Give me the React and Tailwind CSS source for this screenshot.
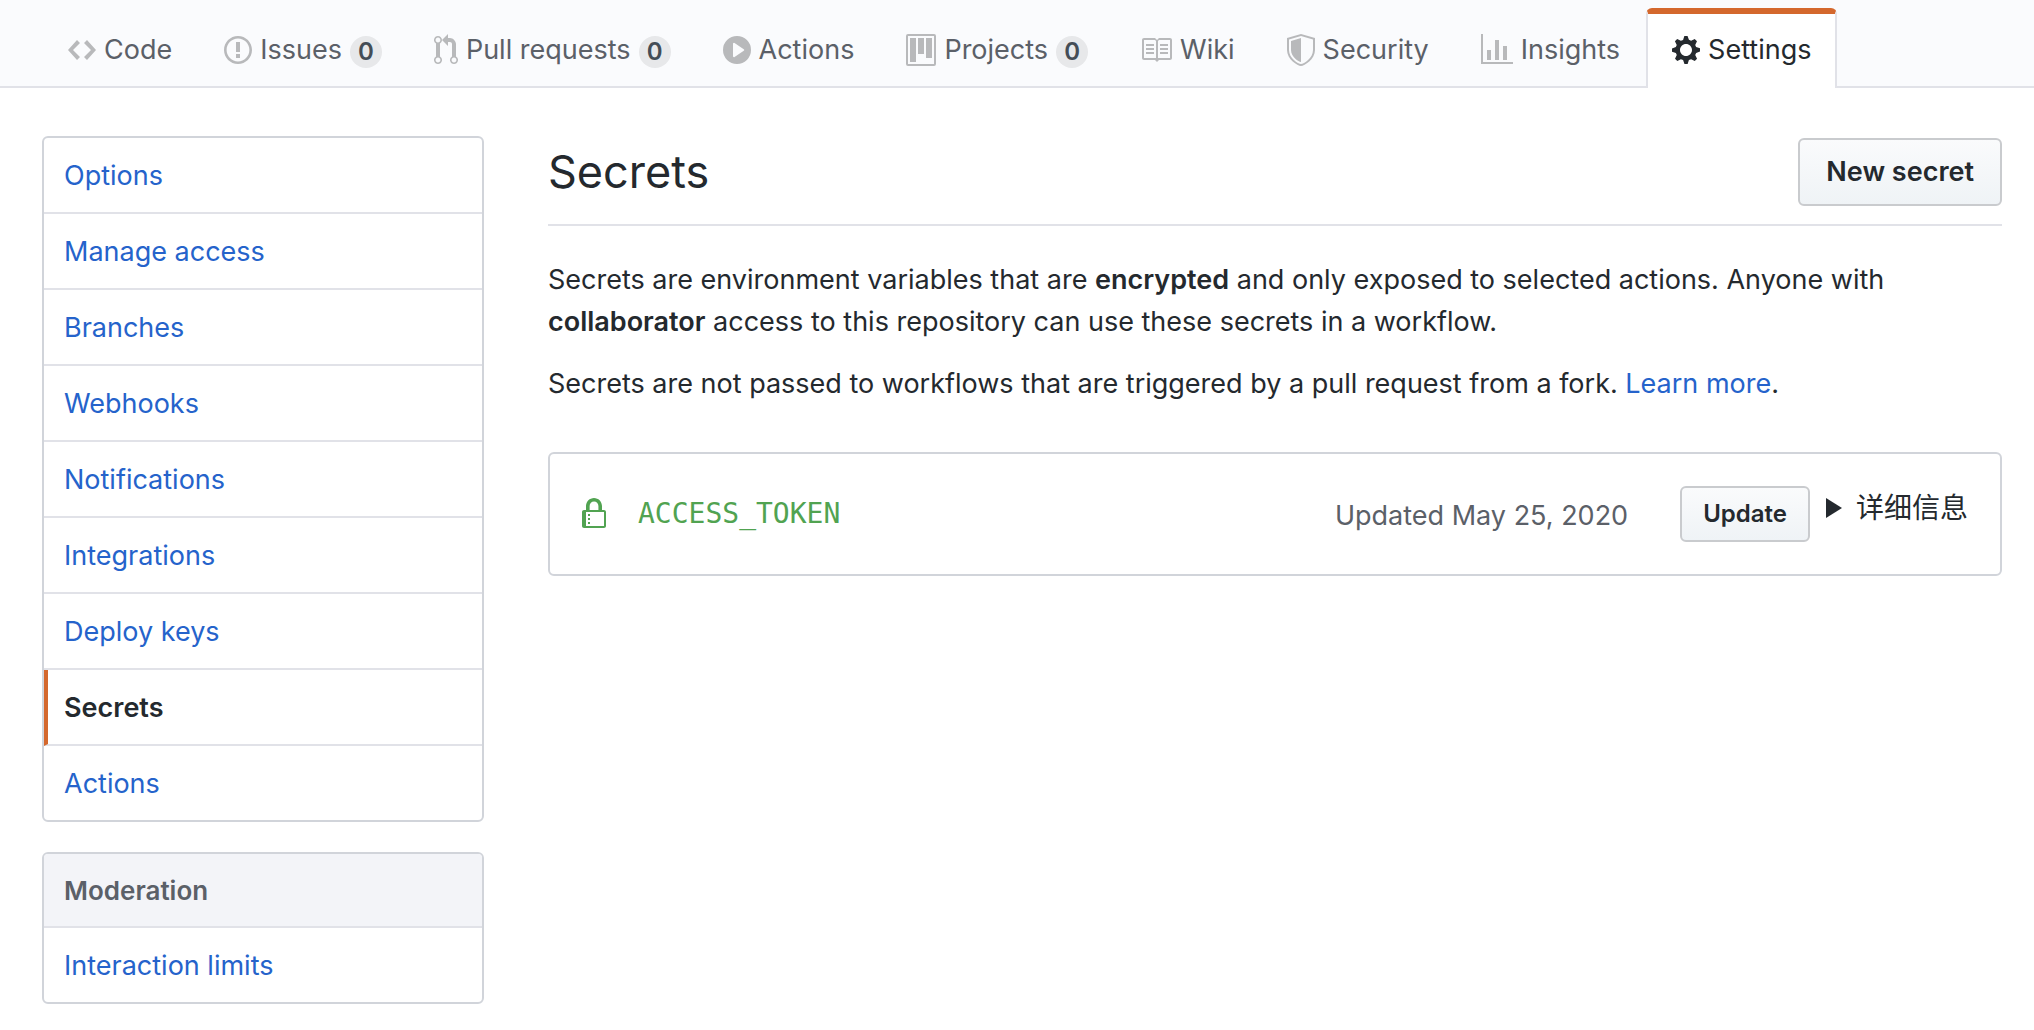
const ICONS = {
  code: {
    w: 14,
    d: "M9.5 3L8 4.5 11.5 8 8 11.5 9.5 13 14 8 9.5 3zm-5 0L0 8l4.5 5L6 11.5 2.5 8 6 4.5 4.5 3z",
  },
  issue: {
    w: 14,
    d: "M7 2.3c3.14 0 5.7 2.56 5.7 5.7s-2.56 5.7-5.7 5.7A5.71 5.71 0 0 1 1.3 8c0-3.14 2.56-5.7 5.7-5.7zM7 1C3.14 1 0 4.14 0 8s3.14 7 7 7 7-3.14 7-7-3.14-7-7-7zm1 3H6v5h2V4zm0 6H6v2h2v-2z",
  },
  pull: {
    w: 12,
    d: "M11 11.28V5c-.03-.78-.34-1.47-.94-2.06C9.46 2.35 8.78 2.03 8 2H7V0L4 3l3 3V4h1c.27.02.48.11.69.31.21.2.3.42.31.69v6.28A1.993 1.993 0 0 0 10 15a1.993 1.993 0 0 0 1-3.72zm-1 2.92c-.66 0-1.2-.55-1.2-1.2 0-.65.55-1.2 1.2-1.2.65 0 1.2.55 1.2 1.2 0 .65-.55 1.2-1.2 1.2zM4 3c0-1.11-.89-2-2-2a1.993 1.993 0 0 0-1 3.72v6.56A1.993 1.993 0 0 0 2 15a1.993 1.993 0 0 0 1-3.72V4.72c.59-.34 1-.98 1-1.72zm-.8 10c0 .66-.55 1.2-1.2 1.2-.65 0-1.2-.55-1.2-1.2 0-.65.55-1.2 1.2-1.2.65 0 1.2.55 1.2 1.2zM2 4.2C1.34 4.2.8 3.65.8 3c0-.65.55-1.2 1.2-1.2.65 0 1.2.55 1.2 1.2 0 .65-.55 1.2-1.2 1.2z",
  },
  play: {
    w: 14,
    d: "M14 8A7 7 0 1 1 0 8a7 7 0 0 1 14 0zm-8.223 3.482l4.599-3.066a.5.5 0 0 0 0-.832L5.777 4.518A.5.5 0 0 0 5 4.934v6.132a.5.5 0 0 0 .777.416z",
  },
  project: {
    w: 15,
    d: "M10 12h3V2h-3v10zm-4-2h3V2H6v8zm-4 4h3V2H2v12zm-1 1h13V1H1v14zM14 0H1a1 1 0 0 0-1 1v14a1 1 0 0 0 1 1h13a1 1 0 0 0 1-1V1a1 1 0 0 0-1-1z",
  },
  book: {
    w: 16,
    d: "M3 5h4v1H3V5zm0 3h4V7H3v1zm0 2h4V9H3v1zm11-5h-4v1h4V5zm0 2h-4v1h4V7zm0 2h-4v1h4V9zm2-6v9c0 .55-.45 1-1 1H9.5l-1 1-1-1H2c-.55 0-1-.45-1-1V3c0-.55.45-1 1-1h5.5l1 1 1-1H15c.55 0 1 .45 1 1zm-8 .5L7.5 3H2v9h6V3.5zm7-.5H9.5l-.5.5V12h6V3z",
  },
  shield: {
    w: 14,
    d: "M0 2l7-2 7 2v6.02C14 12.69 8.69 16 7 16c-1.69 0-7-3.31-7-7.98V2zm1 .75L7 1l6 1.75v5.268C13 12.104 8.449 15 7 15c-1.449 0-6-2.896-6-6.982V2.75zm1 .75L7 2v12c-1.207 0-5-2.482-5-5.985V3.5z",
  },
  graph: {
    w: 16,
    d: "M16 14v1H0V0h1v14h15zM5 13H3V8h2v5zm4 0H7V3h2v10zm4 0h-2V6h2v7z",
  },
  gear: {
    w: 14,
    d: "M14 8.77v-1.6l-1.94-.64-.45-1.09.88-1.84-1.13-1.13-1.81.91-1.09-.45-.69-1.92h-1.6l-.63 1.94-1.11.45-1.84-.88-1.13 1.13.91 1.81-.45 1.09L0 7.23v1.59l1.94.64.45 1.09-.88 1.84 1.13 1.13 1.81-.91 1.09.45.69 1.92h1.59l.63-1.94 1.11-.45 1.84.88 1.13-1.13-.92-1.81.47-1.09L14 8.75v.02zM7 11c-1.66 0-3-1.34-3-3s1.34-3 3-3 3 1.34 3 3-1.34 3-3 3z",
  },
  lock: {
    w: 12,
    d: "M4 13H3v-1h1v1zm8-6v7c0 .55-.45 1-1 1H1c-.55 0-1-.45-1-1V7c0-.55.45-1 1-1h1V4c0-2.2 1.8-4 4-4s4 1.8 4 4v2h1c.55 0 1 .45 1 1zM3.8 6h4.41V4c0-1.22-.98-2.2-2.2-2.2-1.22 0-2.2.98-2.2 2.2v2H3.8zM11 7H2v7h9V7zM4 8H3v1h1V8zm0 2H3v1h1v-1z",
  },
};

function Icon({ name, className }) {
  const { w, d } = ICONS[name];
  return (
    <svg
      width={w * 2}
      height={32}
      viewBox={`0 0 ${w} 16`}
      fill="currentColor"
      aria-hidden="true"
      className={className}
    >
      <path fillRule="evenodd" d={d} />
    </svg>
  );
}

const TABS = [
  { icon: "code", label: "Code" },
  { icon: "issue", label: "Issues", count: 0 },
  { icon: "pull", label: "Pull requests", count: 0 },
  { icon: "play", label: "Actions" },
  { icon: "project", label: "Projects", count: 0 },
  { icon: "book", label: "Wiki" },
  { icon: "shield", label: "Security" },
  { icon: "graph", label: "Insights" },
  { icon: "gear", label: "Settings", selected: true },
];

function Tab({ icon, label, count, selected }) {
  return (
    <a
      href="#"
      aria-current={selected ? "page" : undefined}
      className={
        selected
          ? "-mb-0.5 flex items-center gap-2 rounded-t-md border-x-2 border-t-6 border-x-[#e1e2e8] border-t-[#d4682d] bg-white px-6 pb-0.5 text-[#24292e]"
          : "flex items-center gap-2 border-x-2 border-t-6 border-transparent px-6 text-[#5b6068]"
      }
    >
      <Icon name={icon} className={selected ? "shrink-0" : "shrink-0 text-[#b8b9bb]"} />
      {label}
      {count !== undefined && (
        <span className="mt-1 flex size-8 items-center justify-center rounded-full bg-[#e7e8ea] text-2xl font-semibold text-[#444d56]">
          {count}
        </span>
      )}
    </a>
  );
}

const MENU = [
  "Options",
  "Manage access",
  "Branches",
  "Webhooks",
  "Notifications",
  "Integrations",
  "Deploy keys",
  "Secrets",
  "Actions",
];

function MenuItem({ label, selected }) {
  return (
    <a
      href="#"
      aria-current={selected ? "page" : undefined}
      className={
        selected
          ? "block border-l-4 border-l-[#d4682d] pt-[17px] pb-[15px] pl-4 font-semibold text-[#24292e]"
          : "block px-5 pt-[17px] pb-[15px] text-[#2563cb]"
      }
    >
      {label}
    </a>
  );
}

const BUTTON =
  "rounded-md border-2 border-[#c9cbce] bg-linear-to-b from-[#fafbfc] to-[#eff3f6] font-semibold text-[#24292e]";

export default function App() {
  return (
    <div className="min-h-screen bg-white font-['Inter','Noto_Sans_CJK_SC',sans-serif] text-[27px] leading-[42px] text-[#24292e]">
      <nav
        aria-label="Repository"
        className="flex h-22 border-b-2 border-[#e1e2e8] bg-[#fafbfd] pt-2 pl-[42px] whitespace-nowrap"
      >
        {TABS.map((tab) => (
          <Tab key={tab.label} {...tab} />
        ))}
      </nav>

      <div className="flex items-start gap-16 pt-12 pr-8 pl-[42px]">
        <aside className="flex w-[442px] shrink-0 flex-col gap-[30px]">
          <nav
            aria-label="Settings"
            className="divide-y-2 divide-[#e1e2e8] rounded-md border-2 border-[#d1d4da]"
          >
            {MENU.map((label) => (
              <MenuItem key={label} label={label} selected={label === "Secrets"} />
            ))}
          </nav>
          <nav
            aria-label="Moderation"
            className="divide-y-2 divide-[#e1e2e8] overflow-hidden rounded-md border-2 border-[#d1d4da]"
          >
            <h2 className="bg-[#f3f4f8] px-5 pt-4 pb-3.5 text-[26px] font-semibold text-[#5b6068]">
              Moderation
            </h2>
            <MenuItem label="Interaction limits" />
          </nav>
        </aside>

        <main className="min-w-0 flex-1">
          <header className="flex items-center justify-between border-b-2 border-[#e1e2e8] pt-0.5 pb-[18px]">
            <h1 className="text-[45px]">Secrets</h1>
            <button type="button" className={`${BUTTON} h-17 px-[26px]`}>
              New secret
            </button>
          </header>

          <p className="mt-[33px]">
            Secrets are environment variables that are <strong className="font-semibold">encrypted</strong> and
            only exposed to selected actions. Anyone with{" "}
            <strong className="font-semibold">collaborator</strong> access to this repository can use these
            secrets in a workflow.
          </p>
          <p className="mt-5">
            Secrets are not passed to workflows that are triggered by a pull request from a fork.{" "}
            <a href="#" className="text-[#2563cb]">
              Learn more
            </a>
            .
          </p>

          <section
            aria-label="Repository secrets"
            className="mt-[47px] flex items-center rounded-md border-2 border-[#d1d4da] p-8"
          >
            <Icon name="lock" className="shrink-0 text-[#51a351]" />
            <code className="ml-8 font-['DejaVu_Sans_Mono',monospace] text-[28px] text-[#51a351]">
              ACCESS_TOKEN
            </code>
            <span className="mr-13 ml-auto pt-1 text-[#5b6068]">Updated May 25, 2020</span>
            <div className="flex items-start gap-4">
              <button type="button" className={`${BUTTON} h-14 px-[21px] text-2xl`}>
                Update
              </button>
              <details>
                <summary className="flex cursor-pointer list-none items-center gap-3.5 pt-px text-[28px]">
                  <svg width="16" height="20" viewBox="0 0 16 20" fill="currentColor" aria-hidden="true">
                    <path d="M0 0L16 10L0 20Z" />
                  </svg>
                  详细信息
                </summary>
              </details>
            </div>
          </section>
        </main>
      </div>
    </div>
  );
}
